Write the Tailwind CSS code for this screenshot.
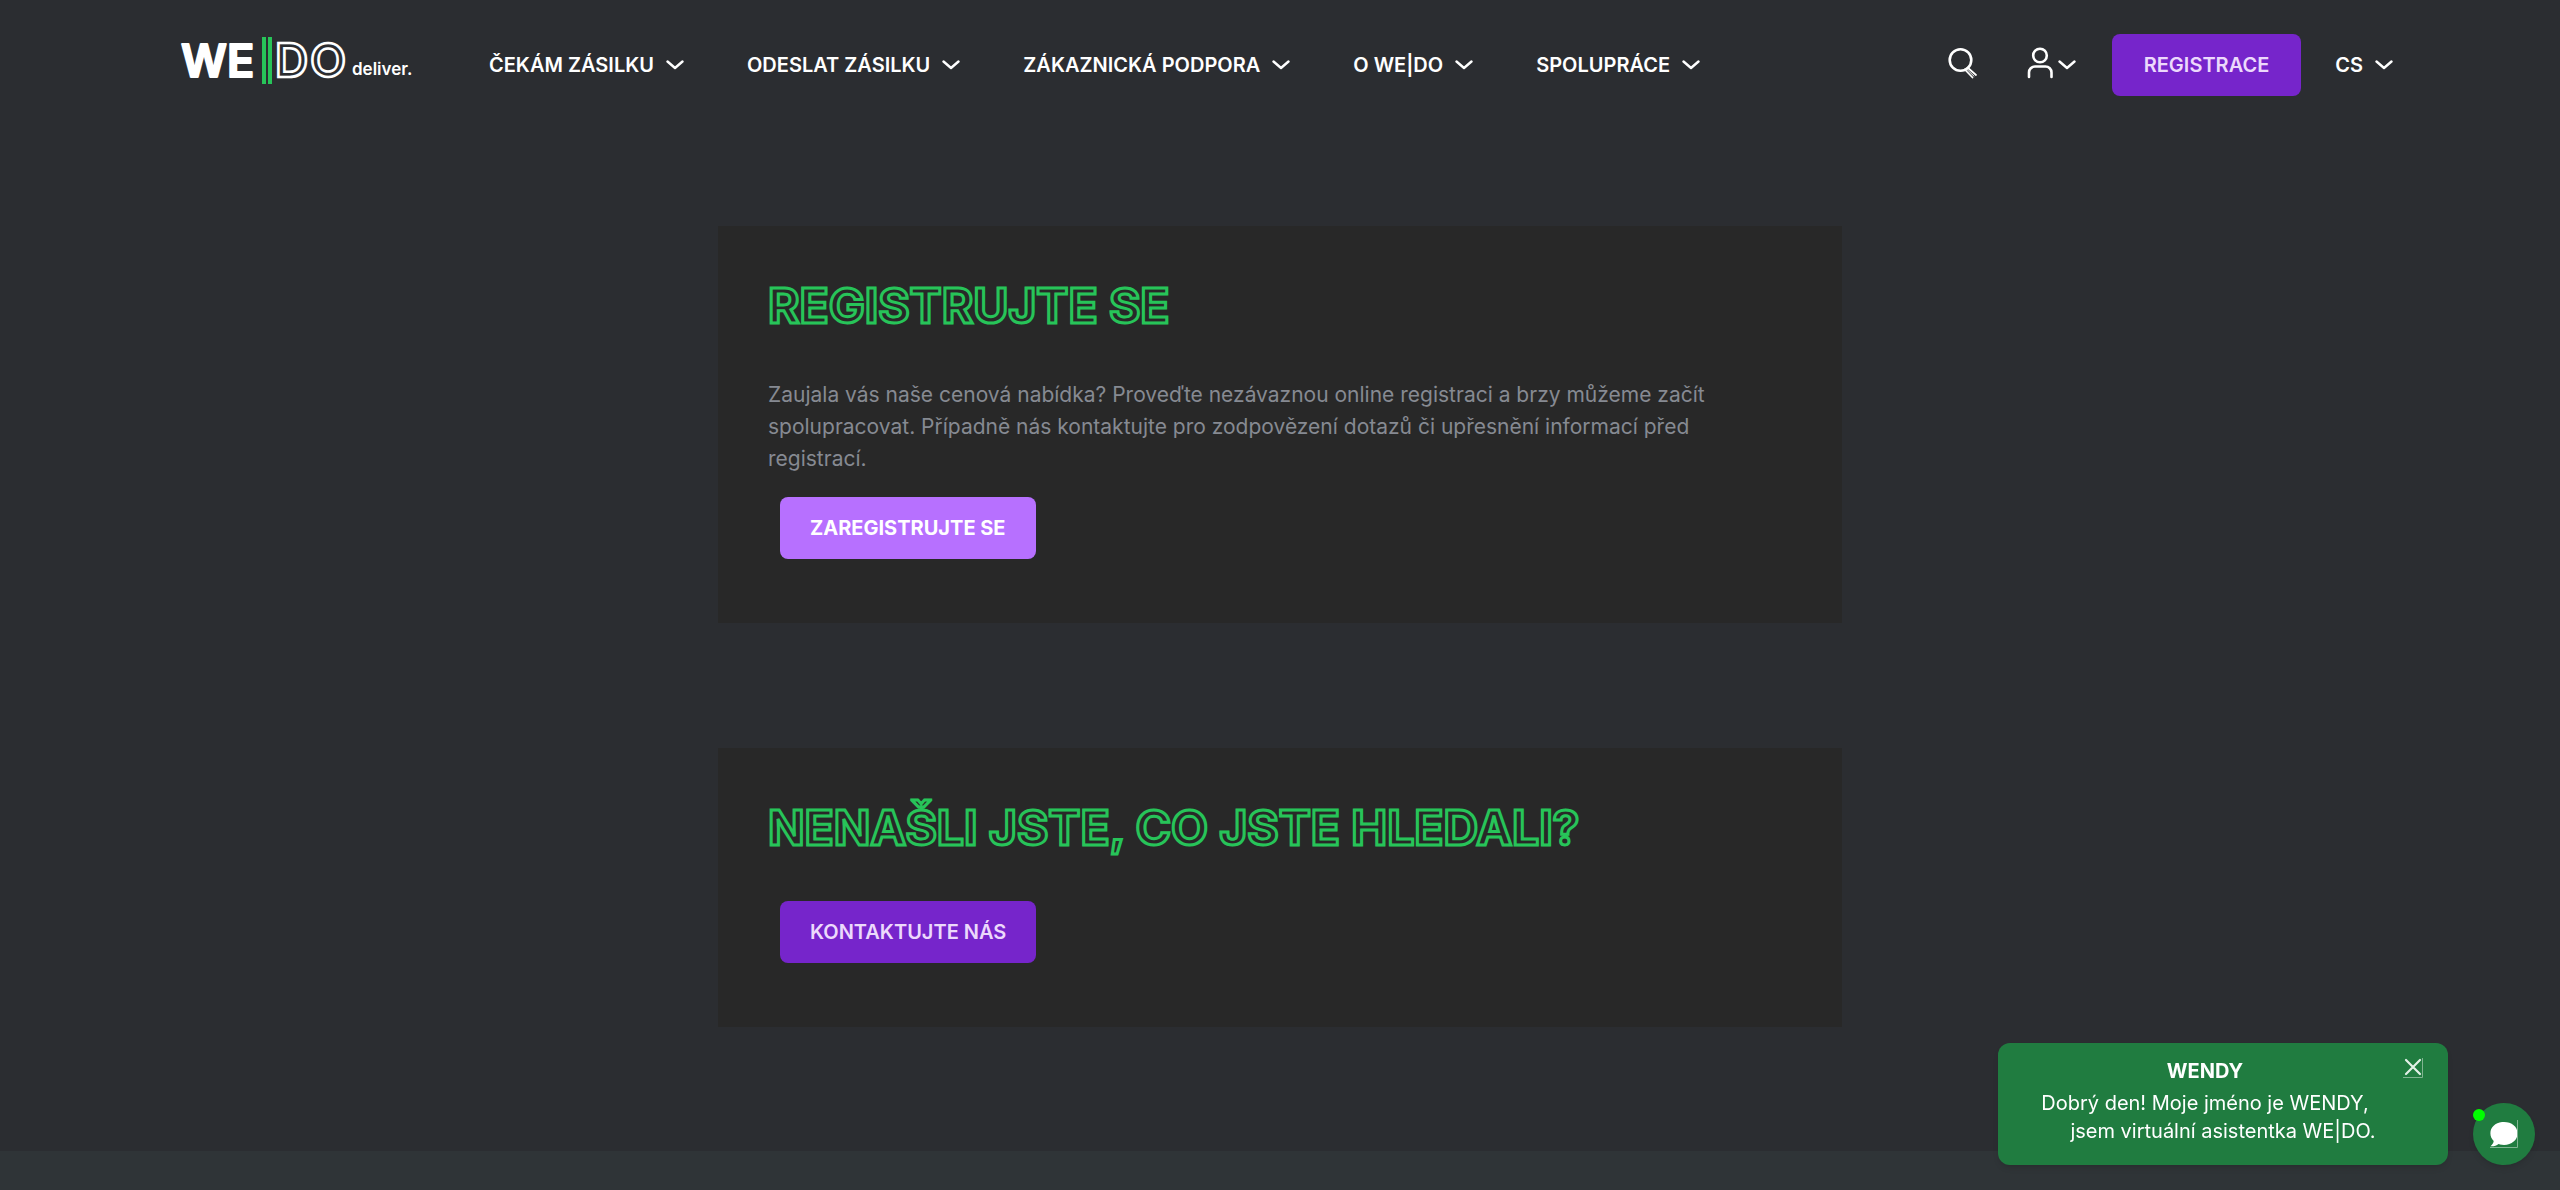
<!DOCTYPE html>
<html lang="cs">

<head>
    <meta charset="UTF-8">
    <meta name="viewport" content="width=device-width, initial-scale=1.0">
    <title>WE|DO deliver.</title>
    <script src="https://cdn.jsdelivr.net/npm/@tailwindcss/browser@4"></script>

    <style>
        body {
            font-family: 'Inter', 'Noto Sans', sans-serif;
        }

        /* hollow green headings */
        .outline-title {
            color: transparent;
            -webkit-text-stroke: 3px #27c459;
        }
    </style>
</head>

<body class="min-h-screen flex flex-col bg-[#2b2d31] text-white">

    <!-- chevron shared by all menus -->
    <svg class="hidden">
        <symbol id="chevron" viewBox="0 0 18 10">
            <path d="M1.5 1.5 L9 8 L16.5 1.5" fill="none" stroke="currentColor" stroke-width="2.4" stroke-linecap="round" stroke-linejoin="round" />
        </symbol>
    </svg>

    <header class="w-full max-w-[2226px] mx-auto pl-[10px] py-[26px] flex items-center">
        <a href="#" class="shrink-0" aria-label="WE|DO deliver.">
            <svg width="240" height="78" viewBox="-4 -8 240 78">
                <text x="0" y="43" font-size="45" font-weight="600" fill="#fff" stroke="#fff" stroke-width="2" stroke-linejoin="round">W</text>
                <text x="46" y="43" font-size="45" font-weight="600" fill="#fff" stroke="#fff" stroke-width="2" stroke-linejoin="round">E</text>
                <rect x="81" y="3" width="4" height="47" fill="#27c459" />
                <rect x="87" y="3" width="4" height="47" fill="#27c459" />
                <text x="94" y="43" font-size="46" font-weight="600" fill="none" stroke="#fff" stroke-width="2.6">D</text>
                <text x="129" y="43" font-size="47" font-weight="600" fill="none" stroke="#fff" stroke-width="2.6">O</text>
                <text x="171" y="41" font-size="17" font-weight="600" fill="#fff">deliver.</text>
            </svg>
        </a>

        <nav class="ml-[72px] flex items-center gap-[63px] text-[20px] leading-[24px] font-semibold whitespace-nowrap">
            <a href="#" class="flex items-center gap-3">ČEKÁM ZÁSILKU <svg class="w-[18px] h-[10px]"><use href="#chevron" /></svg></a>
            <a href="#" class="flex items-center gap-3">ODESLAT ZÁSILKU <svg class="w-[18px] h-[10px]"><use href="#chevron" /></svg></a>
            <a href="#" class="flex items-center gap-3">ZÁKAZNICKÁ PODPORA <svg class="w-[18px] h-[10px]"><use href="#chevron" /></svg></a>
            <a href="#" class="flex items-center gap-3">O WE|DO <svg class="w-[18px] h-[10px]"><use href="#chevron" /></svg></a>
            <a href="#" class="flex items-center gap-3">SPOLUPRÁCE <svg class="w-[18px] h-[10px]"><use href="#chevron" /></svg></a>
        </nav>

        <div class="ml-auto flex items-center">
            <button type="button" aria-label="Hledat" class="pb-1 cursor-pointer">
                <svg width="30" height="32" viewBox="0 0 30 32" fill="none" stroke="#fff" stroke-linecap="round">
                    <circle cx="12.5" cy="13" r="10.8" stroke-width="2.6" />
                    <path d="M19.5 20.5 L28 28 M16.8 22.5 L24.5 30.5" stroke-width="1.8" />
                    <path d="M18.5 22 L26 29.2" stroke-width="1" />
                </svg>
            </button>
            <button type="button" aria-label="Můj účet" class="ml-12 pb-1 flex items-center gap-1 cursor-pointer">
                <svg width="28" height="32" viewBox="0 0 28 32" fill="none" stroke="#fff" stroke-width="2.6" stroke-linecap="round">
                    <circle cx="14" cy="8.5" r="6.8" />
                    <path d="M3 30 V25.5 A6 6 0 0 1 9 19.5 H19.5 A6 6 0 0 1 25.5 25.5 V30" />
                </svg>
                <svg class="w-[18px] h-[10px] mt-1"><use href="#chevron" /></svg>
            </button>
            <a href="#" class="ml-9 h-[62px] px-8 flex items-center rounded-lg bg-[#7625cb] text-[#ecd9fc] text-[20px] leading-[24px] font-semibold">REGISTRACE</a>
            <button type="button" class="ml-[34px] flex items-center gap-3 text-[20px] leading-[24px] font-semibold cursor-pointer">CS <svg class="w-[18px] h-[10px]"><use href="#chevron" /></svg></button>
        </div>
    </header>

    <main class="w-full max-w-[1124px] mx-auto pt-24 pb-[124px] space-y-[125px]">
        <section class="px-[50px] pt-[50px] pb-16 bg-[#282828]">
            <h2 class="outline-title text-[48px] leading-[60px] font-bold">REGISTRUJTE SE</h2>
            <p class="mt-[43px] max-w-[960px] text-[21px] leading-[32px] text-[#868a92]">
                Zaujala vás naše cenová nabídka? Proveďte nezávaznou online registraci a brzy můžeme začít spolupracovat. Případně nás kontaktujte pro zodpovězení dotazů či upřesnění informací před registrací.
            </p>
            <a href="#" class="mt-[22px] ml-3 h-[62px] px-[30px] inline-flex items-center rounded-lg bg-[#b770ff] text-white text-[20px] leading-[24px] font-bold">ZAREGISTRUJTE SE</a>
        </section>

        <section class="px-[50px] pt-[50px] pb-16 bg-[#282828]">
            <h2 class="outline-title text-[48px] leading-[60px] font-bold">NENAŠLI JSTE, CO JSTE HLEDALI?</h2>
            <a href="#" class="mt-[43px] ml-3 h-[62px] px-[30px] inline-flex items-center rounded-lg bg-[#7625cb] text-[#ecd9fc] text-[20px] leading-[24px] font-semibold">KONTAKTUJTE NÁS</a>
        </section>
    </main>

    <footer class="grow bg-[#2f3437]"></footer>

    <!-- chat widget -->
    <div class="fixed right-[25px] bottom-[25px] flex items-end gap-[25px]">
        <div class="relative w-[450px] px-8 pt-[14px] pb-5 rounded-xl bg-[#207c40] text-center text-[20px] leading-[28px] shadow-md">
            <h3 class="pr-9 mb-1 text-[20px] leading-[28px] font-bold">WENDY</h3>
            <p class="pr-9">Dobrý den! Moje jméno je WENDY,</p>
            <p>jsem virtuální asistentka WE|DO.</p>
            <button type="button" aria-label="Zavřít" class="absolute top-[14px] right-[25px] cursor-pointer">
                <svg width="20" height="21" viewBox="0 0 20 21" fill="none">
                    <path d="M3 3 L17 17 M17 3 L3 17" stroke="#e3f0e7" stroke-width="2.2" stroke-linecap="round" />
                    <path d="M0 20.5 H19.5 V1" stroke="#7fb491" />
                </svg>
            </button>
        </div>
        <button type="button" aria-label="Chat" class="relative w-[62px] h-[62px] flex items-center justify-center rounded-full bg-[#207c40] shadow-md cursor-pointer">
            <svg width="28" height="28" viewBox="0 0 28 28">
                <path d="M14 2 C21.7 2 27.6 6.8 27.6 13.3 C27.6 20 21.7 25 14 25 C12 25 10.2 24.7 8.5 24 C6.5 25.8 3.5 26.6 0.5 26.3 C2.3 24.8 3.5 23 3.7 21 C1.5 19 0.4 16.5 0.4 13.3 C0.4 6.8 6.3 2 14 2 Z" fill="#fff" />
                <path d="M0 27.5 H27.5 V0" fill="none" stroke="#7fb491" />
            </svg>
            <span class="absolute left-0 top-[6px] w-3 h-3 rounded-full bg-[#00ff00]"></span>
        </button>
    </div>

</body>

</html>
